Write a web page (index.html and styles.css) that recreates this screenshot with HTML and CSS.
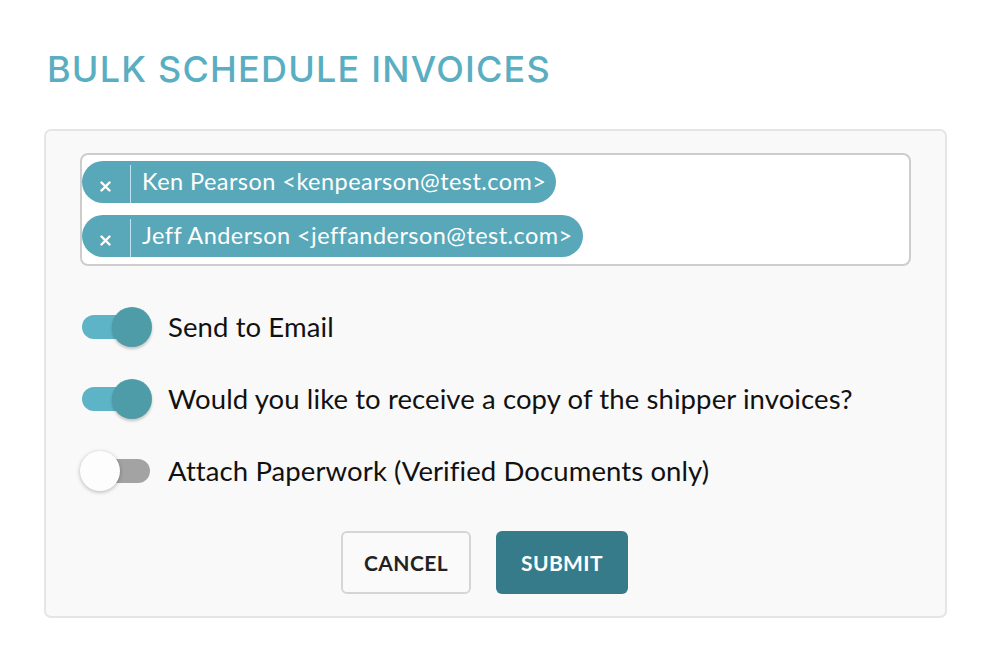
FILE: index.html
```html
<!DOCTYPE html>
<html lang="en">
<head>
<meta charset="utf-8">
<title>Bulk Schedule Invoices</title>
<link rel="stylesheet" href="styles.css">
</head>
<body>
<main class="page">
  <h1 class="title">BULK SCHEDULE INVOICES</h1>
  <section class="card">
    <div class="recipients">
      <div class="chip">
        <span class="chip-remove"><svg width="11" height="11" viewBox="0 0 11 11"><path d="M1.5 1.5 L9.5 9.5 M9.5 1.5 L1.5 9.5" stroke="#fff" stroke-width="2.4" stroke-linecap="round"/></svg></span>
        <span class="chip-label">Ken Pearson &lt;kenpearson@test.com&gt;</span>
      </div>
      <div class="chip">
        <span class="chip-remove"><svg width="11" height="11" viewBox="0 0 11 11"><path d="M1.5 1.5 L9.5 9.5 M9.5 1.5 L1.5 9.5" stroke="#fff" stroke-width="2.4" stroke-linecap="round"/></svg></span>
        <span class="chip-label">Jeff Anderson &lt;jeffanderson@test.com&gt;</span>
      </div>
    </div>

    <div class="options">
      <label class="option">
        <span class="toggle on"><span class="track"></span><span class="knob"></span></span>
        <span class="option-text">Send to Email</span>
      </label>
      <label class="option">
        <span class="toggle on"><span class="track"></span><span class="knob"></span></span>
        <span class="option-text">Would you like to receive a copy of the shipper invoices?</span>
      </label>
      <label class="option">
        <span class="toggle off"><span class="track"></span><span class="knob"></span></span>
        <span class="option-text">Attach Paperwork (Verified Documents only)</span>
      </label>
    </div>

    <div class="actions">
      <button class="btn btn-cancel">CANCEL</button>
      <button class="btn btn-submit">SUBMIT</button>
    </div>
  </section>
</main>
</body>
</html>
```

FILE: styles.css
```css
* { box-sizing: border-box; }

body {
  margin: 0;
  background: #ffffff;
  font-family: "Lato", "Open Sans", sans-serif;
  color: #111;
}

.page {
  padding: 47px 47px 0 44px;
  width: 994px;
}

.title {
  margin: 0 0 38px 3px;
  height: 44px;
  line-height: 44px;
  font-family: "Inter", "Open Sans", sans-serif;
  font-weight: 500;
  font-size: 36px;
  letter-spacing: 1.2px;
  color: #5aaec2;
}

.card {
  width: 903px;
  background: #f9f9f9;
  border: 2px solid #e4e6e6;
  border-radius: 7px;
  padding: 22px 34px 22px 34px;
}

.recipients {
  background: #fff;
  border: 2px solid #cdcdcd;
  border-radius: 8px;
  height: 113px;
  padding: 6px 0 0 0;
  display: flex;
  flex-direction: column;
  align-items: flex-start;
  gap: 12px;
}

.chip {
  display: flex;
  align-items: center;
  height: 42px;
  background: #58a8b9;
  border-radius: 21px;
  color: #fff;
  padding-right: 10px;
}

.chip-remove {
  width: 48px;
  height: 100%;
  display: flex;
  align-items: center;
  justify-content: center;
  padding-top: 9px;
  padding-right: 1px;
}

.chip-label {
  border-left: 1.5px solid #bfe4f0;
  height: 38px;
  margin-top: 4px;
  padding-left: 11px;
  display: flex;
  align-items: center;
  padding-bottom: 4px;
  font-size: 23.5px;
  font-weight: 400;
  letter-spacing: 0.45px;
  line-height: 1;
}

.options {
  margin-top: 41px;
  display: flex;
  flex-direction: column;
  gap: 32px;
}

.option {
  display: flex;
  align-items: center;
  height: 40px;
  gap: 16px;
}

.option-text {
  font-size: 27.5px;
  letter-spacing: 0.1px;
  color: #111;
  line-height: 1;
}

.toggle {
  position: relative;
  width: 72px;
  height: 40px;
  display: block;
  flex: none;
}

.track {
  position: absolute;
  left: 2px;
  right: 2px;
  top: 8px;
  height: 24px;
  border-radius: 12px;
}

.knob {
  position: absolute;
  top: 0;
  width: 40px;
  height: 40px;
  border-radius: 50%;
}

.toggle.on .track { background: #5db4c6; }
.toggle.on .knob {
  right: 0;
  background: #4f9ca9;
  box-shadow: 0 2px 3px rgba(0, 0, 0, 0.22);
}

.toggle.off .track { background: #a3a3a3; }
.toggle.off .knob {
  left: 0;
  background: #fdfdfd;
  box-shadow: 0 1px 4px rgba(0, 0, 0, 0.28);
}

.actions {
  margin-top: 40px;
  display: flex;
  justify-content: center;
  gap: 25px;
  padding-right: 22px;
}

.btn {
  height: 63px;
  border-radius: 6px;
  font-family: "Lato", sans-serif;
  font-weight: 700;
  font-size: 21px;
  letter-spacing: 0.4px;
  cursor: pointer;
}

.btn-cancel {
  width: 130px;
  background: #fafafa;
  border: 2px solid #d5d5d5;
  color: #222;
}

.btn-submit {
  width: 132px;
  background: #367b89;
  border: none;
  color: #fff;
}
```
